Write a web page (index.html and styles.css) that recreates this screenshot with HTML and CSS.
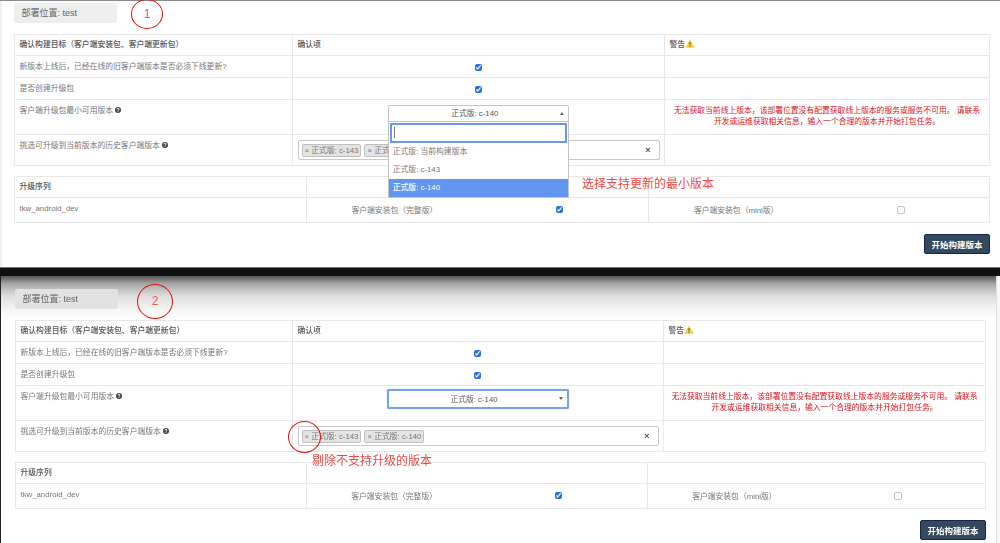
FILE: index.html
```html
<!DOCTYPE html>
<html lang="zh-CN">
<head>
    <meta charset="UTF-8">
    <meta name="viewport" content="width=device-width, initial-scale=1.0">
    <title>开始构建版本</title>
    <link rel="stylesheet" href="styles.css">
</head>
<body>
    <!-- Step 1: dropdown open -->
    <section class="shot shot-first">
        <div class="well">部署位置: test</div>
        <span class="step step-one">1</span>

        <table class="confirm">
            <colgroup><col class="c1"><col class="c2"><col></colgroup>
            <tr class="r-head">
                <th>确认构建目标&#xFF08;客户端安装包、客户端更新包&#xFF09;</th>
                <th>确认项</th>
                <th>警告<svg class="warn" viewBox="0 0 20 18"><path d="M10 1 19.500 17.500H.5Z" fill="#f5d327"/><path d="M9 6h2v6.500H9zM9 14h2v2H9z" fill="#555"/></svg></th>
            </tr>
            <tr class="r-check">
                <td>新版本上线后&#xFF0C;已经在线的旧客户端版本是否必须下线更新?</td>
                <td class="center"><input type="checkbox" checked></td>
                <td></td>
            </tr>
            <tr class="r-check">
                <td>是否创建升级包</td>
                <td class="center"><input type="checkbox" checked></td>
                <td></td>
            </tr>
            <tr class="r-select">
                <td>客户端升级包最小可用版本 <svg class="help" viewBox="0 0 16 16"><circle cx="8" cy="8" r="8" fill="#444"/><text x="8" y="12.500" text-anchor="middle" class="help-mark">?</text></svg></td>
                <td>
                    <div class="select select-open">
                        <div class="select-value">正式版: c-140<span class="arrow arrow-up"></span></div>
                        <div class="dropdown">
                            <div class="search"><input type="text" class="search-input"></div>
                            <div class="option">正式版: 当前构建版本</div>
                            <div class="option">正式版: c-143</div>
                            <div class="option option-active">正式版: c-140</div>
                        </div>
                    </div>
                </td>
                <td class="alert">无法获取当前线上版本&#xFF0C;该部署位置没有配置获取线上版本的服务或服务不可用&#x3002; 请联系<br>开发或运维获取相关信息&#xFF0C;输入一个合理的版本并开始打包任务&#x3002;</td>
            </tr>
            <tr class="r-multi">
                <td>挑选可升级到当前版本的历史客户端版本 <svg class="help" viewBox="0 0 16 16"><circle cx="8" cy="8" r="8" fill="#444"/><text x="8" y="12.500" text-anchor="middle" class="help-mark">?</text></svg></td>
                <td>
                    <div class="multi">
                        <span class="tag">× 正式版: c-143</span>
                        <span class="tag tag-behind">× 正式</span>
                        <span class="clear">×</span>
                    </div>
                </td>
                <td></td>
            </tr>
        </table>

        <table class="sequence">
            <colgroup><col class="s1"><col class="s2"><col></colgroup>
            <tr class="r-head">
                <th>升级序列</th>
                <th></th>
                <th></th>
            </tr>
            <tr class="r-package">
                <td>tkw_android_dev</td>
                <td><div class="package"><span>客户端安装包&#xFF08;完整版&#xFF09;</span><span><input type="checkbox" checked></span></div></td>
                <td><div class="package"><span>客户端安装包&#xFF08;mini版&#xFF09;</span><span><input type="checkbox"></span></div></td>
            </tr>
        </table>

        <div class="actions"><button type="button" class="build">开始构建版本</button></div>
        <span class="note note-one">选择支持更新的最小版本</span>
    </section>

    <div class="gap"></div>

    <!-- Step 2: versions picked -->
    <section class="shot shot-second">
        <div class="well">部署位置: test</div>
        <span class="step step-two">2</span>

        <table class="confirm">
            <colgroup><col class="c1"><col class="c2"><col></colgroup>
            <tr class="r-head">
                <th>确认构建目标&#xFF08;客户端安装包、客户端更新包&#xFF09;</th>
                <th>确认项</th>
                <th>警告<svg class="warn" viewBox="0 0 20 18"><path d="M10 1 19.500 17.500H.5Z" fill="#f5d327"/><path d="M9 6h2v6.500H9zM9 14h2v2H9z" fill="#555"/></svg></th>
            </tr>
            <tr class="r-check">
                <td>新版本上线后&#xFF0C;已经在线的旧客户端版本是否必须下线更新?</td>
                <td class="center"><input type="checkbox" checked></td>
                <td></td>
            </tr>
            <tr class="r-check">
                <td>是否创建升级包</td>
                <td class="center"><input type="checkbox" checked></td>
                <td></td>
            </tr>
            <tr class="r-select">
                <td>客户端升级包最小可用版本 <svg class="help" viewBox="0 0 16 16"><circle cx="8" cy="8" r="8" fill="#444"/><text x="8" y="12.500" text-anchor="middle" class="help-mark">?</text></svg></td>
                <td>
                    <div class="select select-focus">
                        <div class="select-value">正式版: c-140<span class="arrow arrow-down"></span></div>
                    </div>
                </td>
                <td class="alert">无法获取当前线上版本&#xFF0C;该部署位置没有配置获取线上版本的服务或服务不可用&#x3002; 请联系<br>开发或运维获取相关信息&#xFF0C;输入一个合理的版本并开始打包任务&#x3002;</td>
            </tr>
            <tr class="r-multi">
                <td>挑选可升级到当前版本的历史客户端版本 <svg class="help" viewBox="0 0 16 16"><circle cx="8" cy="8" r="8" fill="#444"/><text x="8" y="12.500" text-anchor="middle" class="help-mark">?</text></svg></td>
                <td>
                    <div class="multi">
                        <span class="tag">× 正式版: c-143</span>
                        <span class="tag">× 正式版: c-140</span>
                        <span class="clear">×</span>
                    </div>
                </td>
                <td></td>
            </tr>
        </table>

        <table class="sequence">
            <colgroup><col class="s1"><col class="s2"><col></colgroup>
            <tr class="r-head">
                <th>升级序列</th>
                <th></th>
                <th></th>
            </tr>
            <tr class="r-package">
                <td>tkw_android_dev</td>
                <td><div class="package"><span>客户端安装包&#xFF08;完整版&#xFF09;</span><span><input type="checkbox" checked></span></div></td>
                <td><div class="package"><span>客户端安装包&#xFF08;mini版&#xFF09;</span><span><input type="checkbox"></span></div></td>
            </tr>
        </table>

        <div class="actions"><button type="button" class="build">开始构建版本</button></div>
        <span class="mark-circle"></span>
        <span class="note note-two">剔除不支持升级的版本</span>
        <div class="edge"></div>
    </section>
</body>
</html>
```

FILE: styles.css
```css
* {
    box-sizing: border-box;
}

html, body {
    height: 543px;
    overflow: hidden;
}

body {
    margin: 0;
    background: #111;
    font-family: "Liberation Sans", "Noto Sans CJK SC", sans-serif;
    font-size: 7.8px;
    color: #777;
}

.shot {
    position: relative;
    background: #fff;
    filter: blur(0.35px);
}

.shot-first {
    height: 268px;
    padding: 2px 10px 0 14px;
    border-top: 1px solid #8a8a8a;
    border-bottom: 1px solid #777;
    box-shadow: inset 2px 0 0 #f0f0f0;
}

.shot-second {
    height: 267px;
    padding: 13px 14px 0 15px;
    background: linear-gradient(#555 0, #a8a8a8 8px, #dedede 20px, #f6f6f6 34px, #fff 44px);
    box-shadow: inset 1px 0 0 #222;
}

.gap {
    height: 8px;
    background: #111;
}

.well {
    width: 103px;
    height: 20px;
    margin-bottom: 11px;
    padding-left: 7.5px;
    border-radius: 2px;
    background: #eee;
    font-size: 9px;
    line-height: 20px;
    color: #666;
}

.shot-second .well {
    background: #e2e2e2;
}

.step {
    position: absolute;
    border: 1px solid #e3140f;
    border-radius: 50%;
    text-align: center;
    font-size: 12px;
    color: #ee5a50;
}

.step-one {
    left: 131px;
    top: -2px;
    width: 32px;
    height: 30px;
    line-height: 28px;
}

.step-two {
    left: 137px;
    top: 8px;
    width: 36px;
    height: 35px;
    line-height: 33px;
}

table {
    width: 100%;
    table-layout: fixed;
    border-collapse: collapse;
    background: #fff;
}

th, td {
    padding: 5px 5px 5px 4.5px;
    border: 1px solid #e8e8e8;
    vertical-align: top;
    text-align: left;
    font-weight: normal;
    line-height: 11px;
}

th {
    padding-top: 4px;
    padding-bottom: 4px;
    font-weight: 500;
    color: #555;
}

.c1 {
    width: 278px;
}

.c2 {
    width: 372px;
}

.s1 {
    width: 292px;
}

.s2 {
    width: 342px;
}

.shot-second .c1 {
    width: 277px;
}

.shot-second .c2 {
    width: 371px;
}

.shot-second .s1 {
    width: 291px;
}

.shot-second .s2 {
    width: 341px;
}

.r-head {
    height: 21px;
}

.r-check {
    height: 22px;
}

.r-select {
    height: 35px;
}

.r-multi {
    height: 30px;
}

.r-package {
    height: 25px;
}

.center {
    text-align: center;
}

input[type="checkbox"] {
    width: 7px;
    height: 7px;
    margin: 3px 0 0;
    accent-color: #2b6fe6;
    vertical-align: top;
}

input[type="checkbox"]:not(:checked) {
    appearance: none;
    width: 8px;
    height: 8px;
    border: 1px solid #c4c4c4;
    border-radius: 2px;
    background: #fff;
}

.warn {
    width: 10px;
    height: 9px;
    vertical-align: -1px;
}

.help {
    width: 6px;
    height: 6px;
    vertical-align: 0;
}

.help-mark {
    fill: #fff;
    font-size: 13px;
    font-weight: bold;
}

.alert {
    padding: 5px 3px 0;
    text-align: center;
    color: #e0101c;
}

.select {
    position: relative;
    width: 181px;
    height: 17px;
    margin: 0 auto;
    background: #fff;
    border: 1px solid #c4c4c4;
    border-radius: 2px;
}

.select-open {
    border-radius: 2px 2px 0 0;
}

.select-focus {
    width: 182px;
    height: 20px;
    margin: -2px 0 0 89px;
    border: 2px solid #77a0ee;
    box-shadow: 0 0 1px #77a0ee;
}

.select-value {
    position: relative;
    height: 100%;
    display: flex;
    align-items: center;
    justify-content: center;
    padding-right: 7px;
    color: #555;
}

.arrow {
    position: absolute;
    right: 4px;
    top: 50%;
    margin-top: -2px;
    border-left: 2.5px solid transparent;
    border-right: 2.5px solid transparent;
}

.arrow-up {
    border-bottom: 3px solid #666;
}

.arrow-down {
    border-top: 3px solid #666;
}

.dropdown {
    position: absolute;
    left: -1px;
    right: -1px;
    top: 15px;
    z-index: 2;
    background: #fff;
    border: 1px solid #c4c4c4;
}

.search {
    position: relative;
    height: 21px;
    padding: 2px;
}

.search::after {
    content: "";
    position: absolute;
    left: 5px;
    top: 5px;
    width: 1px;
    height: 11px;
    background: #777;
}

.search-input {
    display: block;
    width: 100%;
    height: 18px;
    padding: 0;
    border: 1px solid #6d97e8;
    box-shadow: 0 0 0 1px #6d97e8;
    outline: none;
    background: #fff;
}

.option {
    height: 18px;
    padding-left: 4px;
    line-height: 18px;
    color: #777;
}

.option-active {
    background: #6195f0;
    color: #fff;
    font-weight: 500;
}

.multi {
    position: relative;
    display: flex;
    align-items: center;
    gap: 3px;
    width: 362px;
    height: 20px;
    padding-left: 3px;
    border: 1px solid #c8c8c8;
    border-radius: 2px;
    background: #fff;
}

.shot-second .multi {
    width: 361px;
}

.tag {
    height: 13px;
    padding: 0 2px;
    border: 1px solid #c0c0c0;
    border-radius: 2px;
    background: #e4e4e4;
    line-height: 11px;
    color: #777;
}

.tag-behind {
    width: 60px;
}

.clear {
    position: absolute;
    right: 8px;
    top: 3px;
    font-size: 9px;
    line-height: 12px;
    font-weight: bold;
    color: #555;
}

.sequence {
    margin-top: 10px;
}

.package {
    display: grid;
    grid-template-columns: 1fr 1fr;
    padding-top: 2px;
    text-align: center;
}

.package span:last-child {
    padding-right: 1px;
}

.package input[type="checkbox"] {
    margin-top: 1px;
}

.actions {
    display: flex;
    justify-content: flex-end;
    margin-top: 11px;
}

.build {
    width: 66px;
    height: 20px;
    padding: 0;
    border: 1px solid #14274a;
    border-radius: 2px;
    background: #34495e;
    color: #fff;
    font-family: inherit;
    font-size: 8.5px;
    font-weight: 700;
}

.note {
    position: absolute;
    font-size: 12px;
    line-height: 14px;
    color: #ee4a44;
}

.note-one {
    left: 582px;
    top: 176px;
}

.note-two {
    left: 312px;
    top: 178px;
}

.mark-circle {
    position: absolute;
    left: 288px;
    top: 145px;
    width: 33px;
    height: 32px;
    border: 1px solid #d8140f;
    border-radius: 50%;
}

.edge {
    position: absolute;
    right: 0;
    top: 0;
    bottom: 0;
    width: 4px;
    border-left: 1px solid #e0e0e0;
    background: #f7f7f7;
}
```
